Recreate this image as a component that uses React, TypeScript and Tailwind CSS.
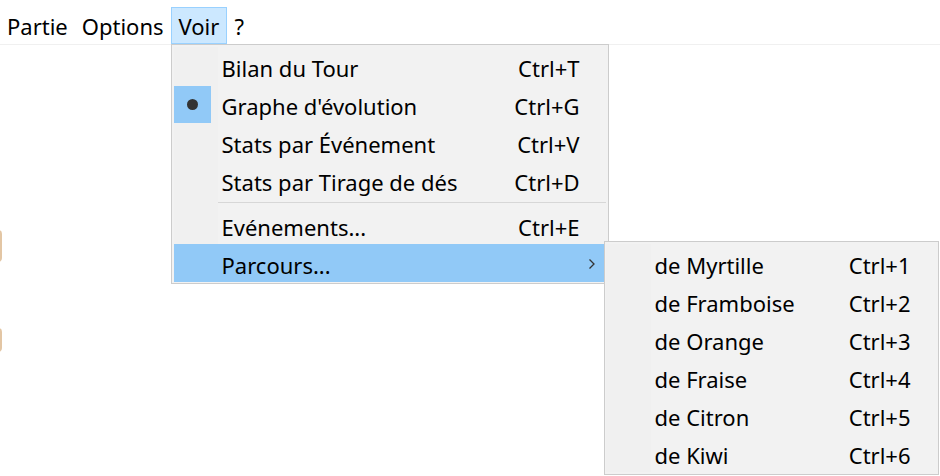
import React from 'react';

type Item = { label: string; shortcut?: string; checked?: boolean; sub?: boolean; active?: boolean } | 'sep';

const voirItems: Item[] = [
    { label: 'Bilan du Tour', shortcut: 'Ctrl+T' },
    { label: "Graphe d'évolution", shortcut: 'Ctrl+G', checked: true },
    { label: 'Stats par Événement', shortcut: 'Ctrl+V' },
    { label: 'Stats par Tirage de dés', shortcut: 'Ctrl+D' },
    'sep',
    { label: 'Evénements...', shortcut: 'Ctrl+E' },
    { label: 'Parcours...', sub: true, active: true },
];

const parcours = [
    ['de Myrtille', 'Ctrl+1'],
    ['de Framboise', 'Ctrl+2'],
    ['de Orange', 'Ctrl+3'],
    ['de Fraise', 'Ctrl+4'],
    ['de Citron', 'Ctrl+5'],
    ['de Kiwi', 'Ctrl+6'],
];

function SubMenu() {
    return (
        <div className="absolute left-[430px] top-[-3px] w-[335px] border border-[#cccccc] bg-[#f2f2f2] py-[2px] pl-[1px]">
            {parcours.map(([label, sc]) => (
                <div key={label} className="flex h-[38px] items-center">
                    <div className="h-full w-[45px] bg-[#f0f0f0]" />
                    <div className="flex-1 pl-[4px] pt-[4px]">{label}</div>
                    <div className="pr-[27px] pt-[4px]">{sc}</div>
                </div>
            ))}
        </div>
    );
}

export default function App() {
    return (
        <div className="relative h-[476px] w-[940px] overflow-hidden bg-white text-[22px] text-black" style={{ fontFamily: '"Noto Sans", "Open Sans", sans-serif' }}>
            {/* background canvas bits */}
            <div className="absolute left-[-6px] top-[230px] h-[32px] w-[8px] rounded-full bg-[#e3c6a4]" />
            <div className="absolute left-[-6px] top-[328px] h-[24px] w-[8px] rounded-full bg-[#e3c6a4]" />

            {/* Menu bar */}
            <div className="flex h-[45px] items-end border-b border-[#f0f0f0]">
                <div className="flex h-[37px] items-center">
                    <div className="px-[7px] pt-[2px]">Partie</div>
                    <div className="px-[7px] pt-[2px]">Options</div>
                    <div className="relative h-full">
                        <div className="flex h-full items-center border border-[#99d1ff] bg-[#cce8ff] px-[7px] pt-[2px]">Voir</div>
                        {/* Dropdown */}
                        <div className="absolute left-0 top-[37px] z-10 w-[438px] border border-[#cccccc] bg-[#f2f2f2] px-[2px] pt-[2px] pb-[1px]">
                            {voirItems.map((it, i) =>
                                it === 'sep' ? (
                                    <div key={i} className="flex h-[7px] items-center">
                                        <div className="w-[44px] self-stretch bg-[#f0f0f0]" />
                                        <div className="h-px flex-1 bg-[#d7d7d7]" />
                                    </div>
                                ) : (
                                    <div key={i} className={`relative flex h-[38px] items-center ${it.active ? 'bg-[#91c9f7]' : ''}`}>
                                        <div className={`flex h-full w-[44px] items-center ${it.active ? '' : 'bg-[#f0f0f0]'}`}>
                                            {it.checked && (
                                                <div className="flex h-[37px] w-[37px] items-center justify-center bg-[#91c9f7]">
                                                    <div className="h-[11px] w-[11px] rounded-full bg-[#333333]" />
                                                </div>
                                            )}
                                        </div>
                                        <div className="flex-1 pl-[4px] pt-[4px]">{it.label}</div>
                                        {it.shortcut && <div className="pr-[26px] pt-[4px]">{it.shortcut}</div>}
                                        {it.sub && (
                                            <svg className="mr-[10px] mt-[2px]" width="8" height="12" viewBox="0 0 8 12">
                                                <path d="M1.5 1.5 L6 6 L1.5 10.5" fill="none" stroke="#333" strokeWidth="1.3" />
                                            </svg>
                                        )}
                                        {it.sub && <SubMenu />}
                                    </div>
                                )
                            )}
                        </div>
                    </div>
                    <div className="px-[7px] pt-[2px]">?</div>
                </div>
            </div>
        </div>
    );
}
